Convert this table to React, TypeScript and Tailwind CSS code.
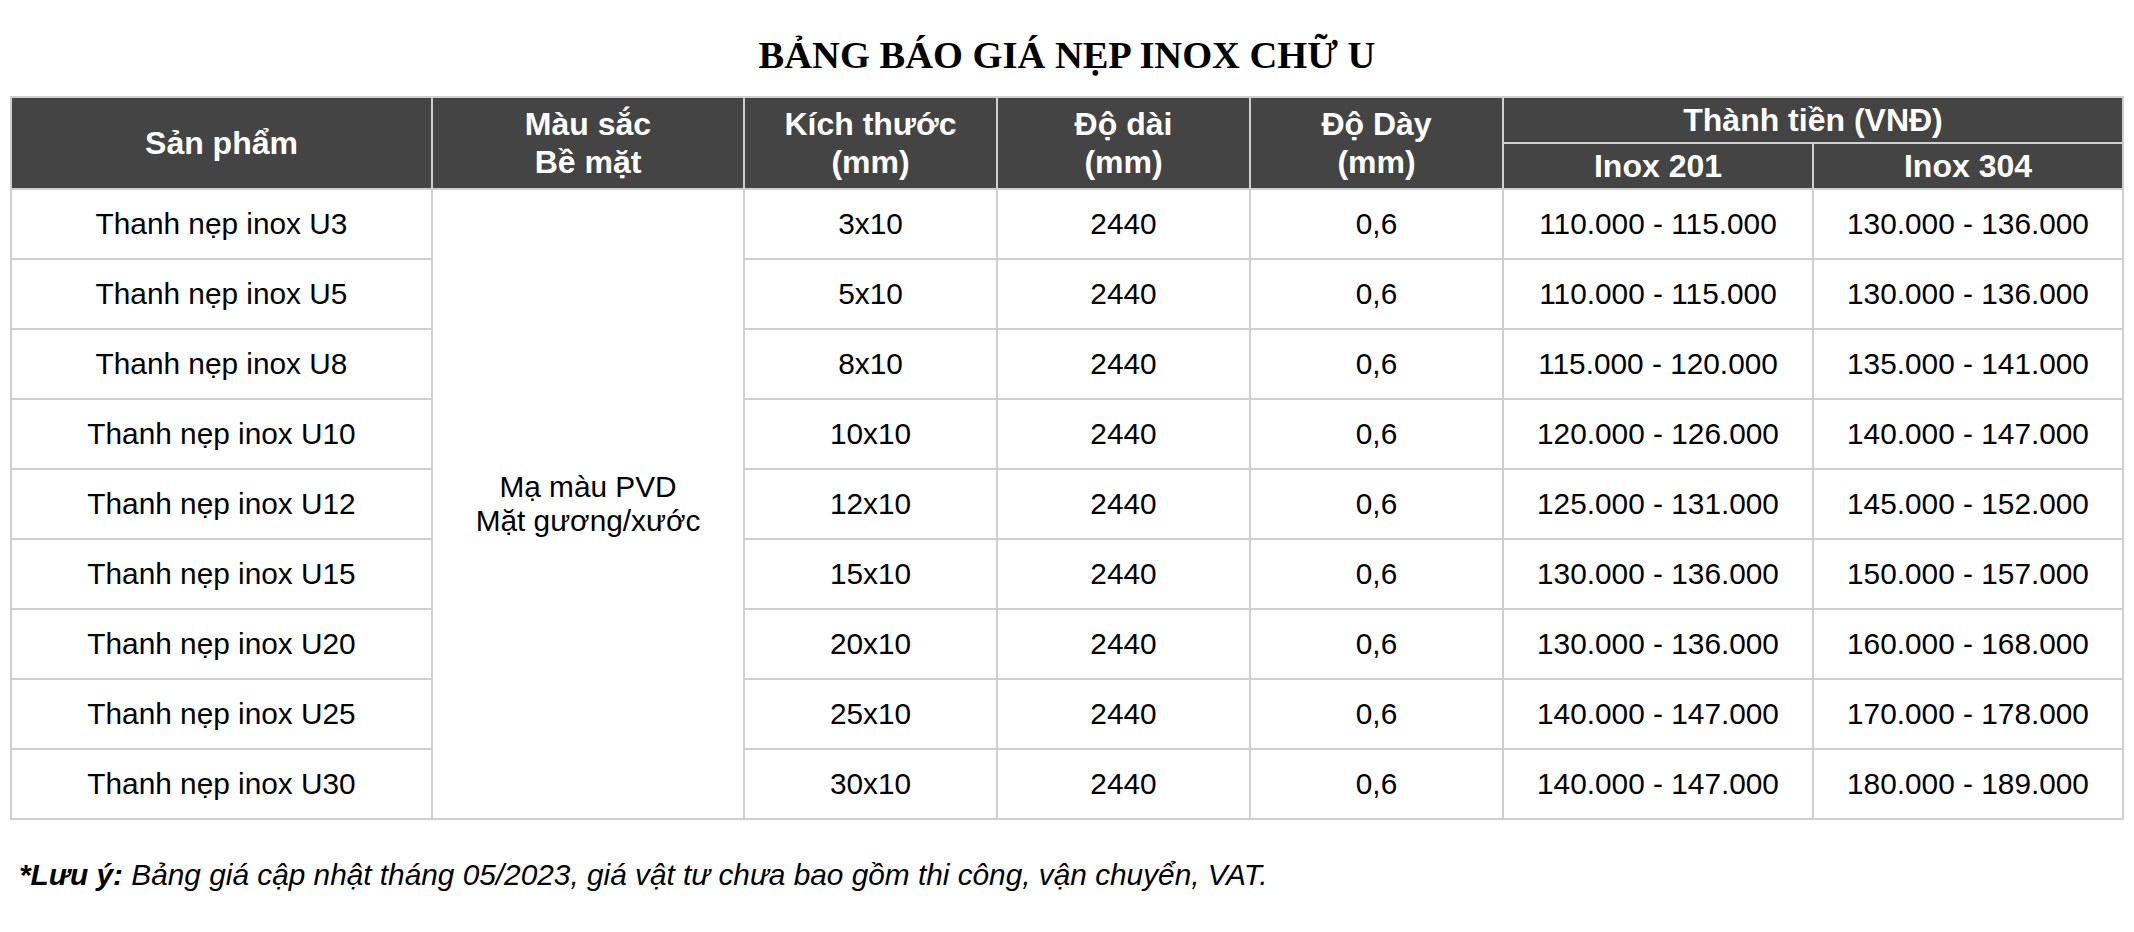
import React from "react";

const rows = [
  ["Thanh nẹp inox U3", "3x10", "110.000 - 115.000", "130.000 - 136.000"],
  ["Thanh nẹp inox U5", "5x10", "110.000 - 115.000", "130.000 - 136.000"],
  ["Thanh nẹp inox U8", "8x10", "115.000 - 120.000", "135.000 - 141.000"],
  ["Thanh nẹp inox U10", "10x10", "120.000 - 126.000", "140.000 - 147.000"],
  ["Thanh nẹp inox U12", "12x10", "125.000 - 131.000", "145.000 - 152.000"],
  ["Thanh nẹp inox U15", "15x10", "130.000 - 136.000", "150.000 - 157.000"],
  ["Thanh nẹp inox U20", "20x10", "130.000 - 136.000", "160.000 - 168.000"],
  ["Thanh nẹp inox U25", "25x10", "140.000 - 147.000", "170.000 - 178.000"],
  ["Thanh nẹp inox U30", "30x10", "140.000 - 147.000", "180.000 - 189.000"],
];

const H = "bg-[#444444] text-white font-bold text-[32px] leading-[38px] flex flex-col items-center justify-center text-center";
const C = "bg-white text-black text-[29.8px] leading-[34px] flex items-center justify-center text-center";

export default function App() {
  return (
    <div
      className="w-[2134px] h-[932px] bg-white pt-[36px]"
      style={{ fontFamily: '"Liberation Sans", Arial, sans-serif' }}
    >
      <h1
        className="text-center font-bold text-[38.5px] leading-[38px] h-[38px] mb-[22px] text-black"
        style={{ fontFamily: '"Liberation Serif", "Times New Roman", serif' }}
      >
        BẢNG BÁO GIÁ NẸP INOX CHỮ U
      </h1>
      <div className="mx-[10px] w-[2114px] bg-[#cfcfcf] p-[2px] grid gap-[2px] grid-cols-[419px_310px_251px_251px_251px_308px_308px] grid-rows-[44px_44px_repeat(9,68px)]">
        <div className={`${H} row-span-2`}>Sản phẩm</div>
        <div className={`${H} row-span-2`}>
          <span>Màu sắc</span>
          <span>Bề mặt</span>
        </div>
        <div className={`${H} row-span-2`}>
          <span>Kích thước</span>
          <span>(mm)</span>
        </div>
        <div className={`${H} row-span-2`}>
          <span>Độ dài</span>
          <span>(mm)</span>
        </div>
        <div className={`${H} row-span-2`}>
          <span>Độ Dày</span>
          <span>(mm)</span>
        </div>
        <div className={`${H} col-span-2`}>Thành tiền (VNĐ)</div>
        <div className={H}>Inox 201</div>
        <div className={H}>Inox 304</div>

        <div className={`${C} col-start-2 row-start-3 row-span-9 flex-col`}>
          <span>Mạ màu PVD</span>
          <span>Mặt gương/xước</span>
        </div>

        {rows.map((r, i) => (
          <React.Fragment key={i}>
            <div className={`${C} col-start-1`}>{r[0]}</div>
            <div className={`${C} col-start-3`}>{r[1]}</div>
            <div className={C}>2440</div>
            <div className={C}>0,6</div>
            <div className={C}>{r[2]}</div>
            <div className={C}>{r[3]}</div>
          </React.Fragment>
        ))}
      </div>
      <p className="mt-[39px] pl-[19px] text-[29.8px] leading-[32px] italic text-black">
        <span className="font-bold">*Lưu ý:</span> Bảng giá cập nhật tháng 05/2023, giá vật tư chưa bao gồm thi công, vận chuyển, VAT.
      </p>
    </div>
  );
}
